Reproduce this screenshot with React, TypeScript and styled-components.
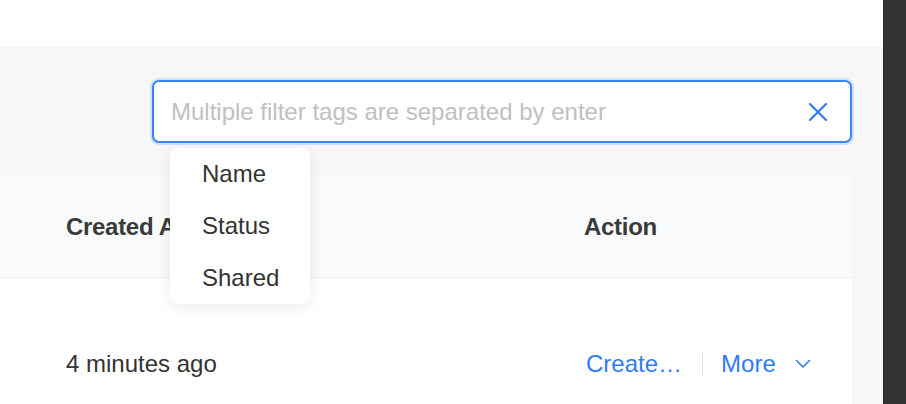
import React from "react";
import styled, { createGlobalStyle } from "styled-components";

const Global = createGlobalStyle`
  html, body { margin: 0; padding: 0; }
  body {
    width: 906px; height: 404px; overflow: hidden;
    font-family: "Liberation Sans", Arial, sans-serif;
    -webkit-font-smoothing: antialiased;
  }
`;

const Page = styled.div`
  display: flex;
  width: 906px;
  height: 404px;
`;

const Main = styled.div`
  flex: 1;
  display: flex;
  flex-direction: column;
  background: #f7f7f7;
  overflow: hidden;
`;

const SideBar = styled.div`
  width: 22px;
  background: #333333;
  border-left: 1px solid #2a2a2a;
`;

const TopBar = styled.div`
  flex-shrink: 0;
  height: 47px;
  background: #ffffff;
`;

const Content = styled.div`
  flex: 1;
  min-height: 0;
  display: flex;
  flex-direction: column;
  padding: 33px 31px 0 0;
`;

const Toolbar = styled.div`
  flex-shrink: 0;
  display: flex;
  justify-content: flex-end;
`;

const SearchWrap = styled.div`
  position: relative;
  width: 700px;
`;

const SearchBox = styled.div`
  box-sizing: border-box;
  height: 63px;
  display: flex;
  align-items: center;
  padding: 0 22px 0 17px;
  background: #fff;
  border: 2px solid #3a86f7;
  border-radius: 7px;
  box-shadow: 0 0 0 2px rgba(58, 134, 247, 0.2);
`;

const Placeholder = styled.span`
  flex: 1;
  font-size: 24px;
  color: #c0c0c0;
`;

const Menu = styled.ul`
  position: absolute;
  left: 18px;
  top: 68px;
  width: 140px;
  margin: 0;
  padding: 0;
  list-style: none;
  background: #fff;
  border-radius: 8px;
  box-shadow: 0 3px 14px rgba(0, 0, 0, 0.08);
  z-index: 2;
`;

const MenuItem = styled.li`
  height: 52px;
  line-height: 52px;
  padding-left: 32px;
  font-size: 24px;
  color: #333;
`;

const Card = styled.div`
  margin-top: 33px;
  background: #fff;
  border-top-right-radius: 9px;
  flex: 1;
  overflow: hidden;
`;

const HeadRow = styled.div`
  display: grid;
  grid-template-columns: 518px 1fr;
  align-items: center;
  height: 101px;
  padding-left: 66px;
  background: #f9fafc;
  border-bottom: 1px solid #eeeeee;
`;

const HeadCell = styled.div`
  font-size: 24px;
  font-weight: 700;
  color: #3a3a3a;
  letter-spacing: -0.3px;
`;

const BodyRow = styled.div`
  display: grid;
  grid-template-columns: 520px 1fr;
  align-items: center;
  height: 172px;
  padding-left: 66px;
`;

const Cell = styled.div`
  font-size: 24px;
  color: #333;
`;

const Actions = styled.div`
  display: flex;
  align-items: center;
`;

const LinkText = styled.span`
  font-size: 24px;
  color: #2f7cf6;
`;

const Divider = styled.span`
  width: 1px;
  height: 24px;
  background: #e6e6e6;
  margin: 0 18px 0 20px;
`;

const Chevron = styled.svg`
  margin-left: 19px;
`;

export default function App() {
  return (
    <>
      <Global />
      <Page>
        <Main>
          <TopBar />
          <Content>
            <Toolbar>
              <SearchWrap>
                <SearchBox>
                  <Placeholder>Multiple filter tags are separated by enter</Placeholder>
                  <svg width="20" height="20" viewBox="0 0 20 20">
                    <path d="M2 2 L18 18 M18 2 L2 18" stroke="#2f7cf6" strokeWidth="2.2" strokeLinecap="round" fill="none" />
                  </svg>
                </SearchBox>
                <Menu>
                  <MenuItem>Name</MenuItem>
                  <MenuItem>Status</MenuItem>
                  <MenuItem>Shared</MenuItem>
                </Menu>
              </SearchWrap>
            </Toolbar>
            <Card>
              <HeadRow>
                <HeadCell>Created At</HeadCell>
                <HeadCell>Action</HeadCell>
              </HeadRow>
              <BodyRow>
                <Cell>4 minutes ago</Cell>
                <Actions>
                  <LinkText>Create…</LinkText>
                  <Divider />
                  <LinkText>More</LinkText>
                  <Chevron width="16" height="10" viewBox="0 0 16 10">
                    <path d="M1.5 1.5 L8 8 L14.5 1.5" stroke="#2f7cf6" strokeWidth="1.6" fill="none" strokeLinecap="round" strokeLinejoin="round" />
                  </Chevron>
                </Actions>
              </BodyRow>
            </Card>
          </Content>
        </Main>
        <SideBar />
      </Page>
    </>
  );
}
